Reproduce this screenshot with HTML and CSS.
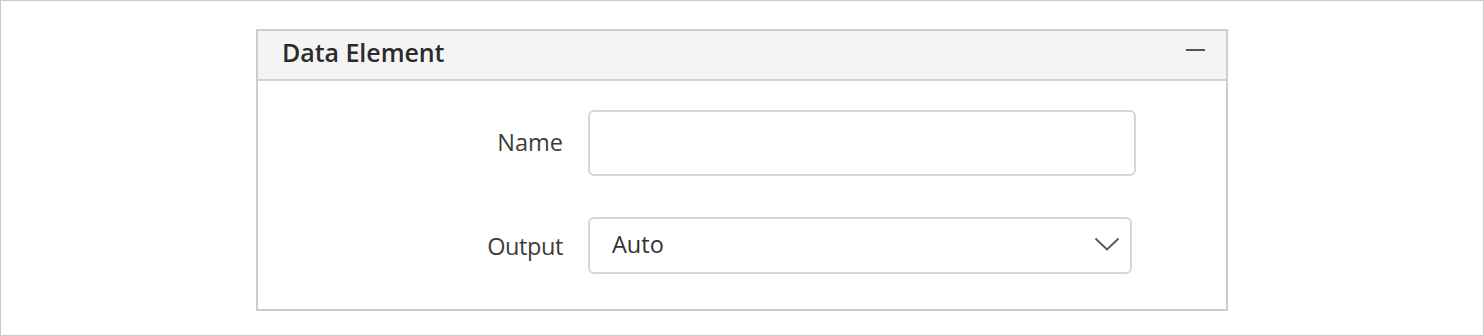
FILE: index.html
```html
<!DOCTYPE html>
<html>
<head>
<meta charset="utf-8">
<link rel="stylesheet" href="styles.css">
</head>
<body>
<div class="frame">
  <div class="panel">
    <div class="panel-header">
      <span class="title">Data Element</span>
      <span class="collapse"></span>
    </div>
    <div class="panel-body">
      <div class="row row-name">
        <label class="label">Name</label>
        <div class="input"></div>
      </div>
      <div class="row row-output">
        <label class="label">Output</label>
        <div class="select">
          <span class="value">Auto</span>
          <svg class="chevron" width="26" height="16" viewBox="0 0 26 16"><path d="M1.5 2.5 L13 13.5 L24.5 2.5" fill="none" stroke="#555" stroke-width="1.8"/></svg>
        </div>
      </div>
    </div>
  </div>
</div>
</body>
</html>
```
FILE: styles.css
```css
html, body { margin: 0; padding: 0; background: #fff; }
body { font-family: "Open Sans", "Segoe UI", Roboto, sans-serif; color: #333; }
.frame {
  box-sizing: border-box;
  width: 1484px;
  height: 336px;
  border: 1px solid #c9c9c9;
  padding: 28px 0 0 255px;
}
.panel {
  box-sizing: border-box;
  width: 972px;
  height: 282px;
  border: 2px solid #cdcdcd;
  background: #fff;
  display: flex;
  flex-direction: column;
}
.panel-header {
  box-sizing: border-box;
  height: 50px;
  background: #f4f4f4;
  border-bottom: 2px solid #d2d2d2;
  display: flex;
  align-items: center;
  justify-content: space-between;
  padding: 0 21px 0 24px;
}
.title {
  font-size: 25px;
  font-weight: 600;
  color: #2b2b2b;
  letter-spacing: -0.05px;
  margin-top: -6px;
}
.collapse {
  width: 19px;
  height: 2px;
  background: #555;
  margin-top: -10px;
}
.panel-body {
  padding-top: 29px;
  display: flex;
  flex-direction: column;
  gap: 41px;
}
.row {
  display: flex;
  align-items: center;
}
.label {
  box-sizing: border-box;
  width: 305px;
  text-align: right;
  font-size: 23.5px;
  color: #3c3c3c;
  margin-right: 25px;
  margin-top: -3px;
}
.row-output .label { letter-spacing: -0.4px; margin-top: 0; }
.input {
  box-sizing: border-box;
  width: 548px;
  height: 66px;
  border: 2px solid #d6d6d6;
  border-radius: 6px;
  background: #fff;
}
.select {
  box-sizing: border-box;
  width: 544px;
  height: 57px;
  border: 2px solid #d6d6d6;
  border-radius: 6px;
  background: #fff;
  display: flex;
  align-items: center;
  justify-content: space-between;
  padding: 0 10px 0 22px;
}
.value {
  font-size: 23.5px;
  color: #333;
  margin-top: -4px;
}
.chevron { display: block; margin-top: -4px; }
```
